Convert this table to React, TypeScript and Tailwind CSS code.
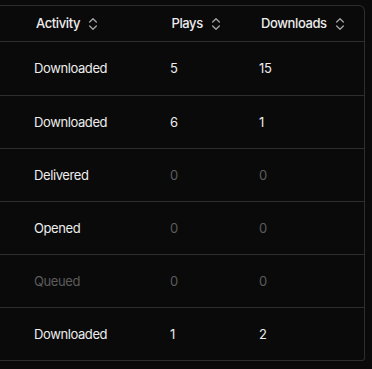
import React from "react";

const rows = [
  { activity: "Downloaded", plays: 5, downloads: 15, muted: false },
  { activity: "Downloaded", plays: 6, downloads: 1, muted: false },
  { activity: "Delivered", plays: 0, downloads: 0, muted: false },
  { activity: "Opened", plays: 0, downloads: 0, muted: false },
  { activity: "Queued", plays: 0, downloads: 0, muted: true },
  { activity: "Downloaded", plays: 1, downloads: 2, muted: false },
];

const heights = ["h-[54px]", "h-[53px]", "h-[53px]", "h-[53px]", "h-[53px]", "h-[52px]"];

function SortIcon() {
  return (
    <svg
      width="16"
      height="16"
      viewBox="0 0 24 24"
      fill="none"
      stroke="currentColor"
      strokeWidth="2"
      strokeLinecap="round"
      strokeLinejoin="round"
      className="shrink-0 text-[#a3a3a3]"
    >
      <path d="m7 15 5 5 5-5" />
      <path d="m7 9 5-5 5 5" />
    </svg>
  );
}

function HeaderCell({ label, className }: { label: string; className: string }) {
  return (
    <div className={`flex items-center gap-[5px] ${className}`}>
      <span className="font-medium text-[#ededed]">{label}</span>
      <SortIcon />
    </div>
  );
}

function Num({ v }: { v: number }) {
  return <span className={v === 0 ? "text-[#5c5c5c]" : "text-[#ededed]"}>{v}</span>;
}

export default function App() {
  return (
    <div
      className="w-[372px] h-[369px] bg-[#0a0a0a] pt-[5px] pr-[7px]"
      style={{ fontFamily: "Inter, 'Noto Sans', sans-serif" }}
    >
      <div className="border-t border-r border-b border-[#2e2e2e] rounded-tr-md rounded-br-[3px] text-[13px] leading-none tracking-[-0.4px]">
        <div className="flex h-[36px] border-b border-[#2e2e2e]">
          <HeaderCell label="Activity" className="w-[170px] pl-[36px]" />
          <HeaderCell label="Plays" className="w-[89px] pl-[1.5px]" />
          <HeaderCell label="Downloads" className="flex-1 pl-[2px]" />
        </div>
        {rows.map((r, i) => (
          <div
            key={i}
            className={`flex items-center ${heights[i]} ${i < rows.length - 1 ? "border-b border-[#2e2e2e]" : ""}`}
          >
            <div className="w-[170px] pl-[34px]">
              <span className={r.muted ? "text-[#5c5c5c]" : "text-[#ededed]"}>{r.activity}</span>
            </div>
            <div className="w-[89px]">
              <Num v={r.plays} />
            </div>
            <div className="flex-1">
              <Num v={r.downloads} />
            </div>
          </div>
        ))}
      </div>
    </div>
  );
}
